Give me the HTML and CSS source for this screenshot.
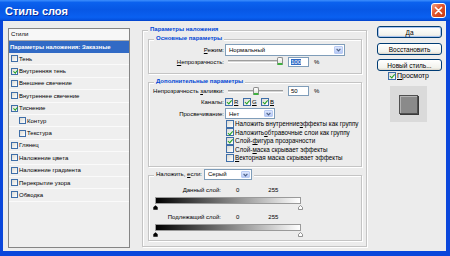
FILE: index.html
```html
<html>
  <head>
    <title>Стиль слоя</title>
    <meta charset="utf-8" />
    <link rel="stylesheet" href="styles.css">
  </head>
  <body>
    <div class="window">
      <div class="titlebar">
        <span class="title">Стиль слоя</span>
        <span class="close">
          <svg width="9" height="9" viewBox="0 0 9 9"><path d="M1.5 1.5 L7.5 7.5 M7.5 1.5 L1.5 7.5" stroke="#fff" stroke-width="1.7" stroke-linecap="round"/></svg>
        </span>
      </div>
      <div class="frame">

        <div class="styles-list">
          <div class="list-head">Стили</div>
          <div class="list-row selected">Параметры наложения: Заказные</div>
          <div class="list-row"><span class="cb"></span>Тень</div>
          <div class="list-row"><span class="cb on"></span>Внутренняя тень</div>
          <div class="list-row"><span class="cb"></span>Внешнее свечение</div>
          <div class="list-row"><span class="cb"></span>Внутреннее свечение</div>
          <div class="list-row"><span class="cb on"></span>Тиснение</div>
          <div class="list-row sub"><span class="cb"></span>Контур</div>
          <div class="list-row sub"><span class="cb"></span>Текстура</div>
          <div class="list-row"><span class="cb"></span>Глянец</div>
          <div class="list-row"><span class="cb"></span>Наложение цвета</div>
          <div class="list-row"><span class="cb"></span>Наложение градиента</div>
          <div class="list-row"><span class="cb"></span>Перекрытие узора</div>
          <div class="list-row"><span class="cb"></span>Обводка</div>
        </div>

        <div class="group outer">
          <div class="group-title">Параметры наложения</div>

          <div class="group inner basic">
            <div class="group-title">Основные параметры</div>
            <div class="row r-mode">
              <span class="lbl"><u>Р</u>ежим:</span>
              <span class="select w-mode"><span class="sel-text">Нормальный</span><span class="drop"><svg width="5" height="4" viewBox="0 0 5 4"><path d="M0.6 0.8 L2.5 2.8 L4.4 0.8" stroke="#4d6185" stroke-width="1.2" fill="none"/></svg></span></span>
            </div>
            <div class="row r-opacity">
              <span class="lbl"><u>Н</u>епрозрачность:</span>
              <span class="slider"><span class="thumb" style="left: 49px"></span></span>
              <span class="num"><span class="hl">100</span></span>
              <span class="pct">%</span>
            </div>
          </div>

          <div class="group inner advanced">
            <div class="group-title">Дополнительные параметры</div>
            <div class="row r-fill">
              <span class="lbl">Непрозрачность <u>з</u>аливки:</span>
              <span class="slider"><span class="thumb" style="left: 25px"></span></span>
              <span class="num">50</span>
              <span class="pct">%</span>
            </div>
            <div class="row r-channels">
              <span class="lbl">Каналы:</span>
              <span class="ch"><span class="cb big on"></span><u>R</u></span>
              <span class="ch"><span class="cb big on"></span><u>G</u></span>
              <span class="ch"><span class="cb big on"></span><u>B</u></span>
            </div>
            <div class="row r-knock">
              <span class="lbl">Просвечивание:</span>
              <span class="select w-knock"><span class="sel-text">Нет</span><span class="drop"><svg width="5" height="4" viewBox="0 0 5 4"><path d="M0.6 0.8 L2.5 2.8 L4.4 0.8" stroke="#4d6185" stroke-width="1.2" fill="none"/></svg></span></span>
            </div>
            <div class="checks">
              <div class="check"><span class="cb big"></span>Наложить внутренние <u>э</u>ффекты как группу</div>
              <div class="check"><span class="cb big on"></span>Наложить <u>о</u>бтравочные слои как группу</div>
              <div class="check"><span class="cb big on"></span>Слой-<u>ф</u>игура прозрачности</div>
              <div class="check"><span class="cb big"></span>Слой-<u>м</u>аска скрывает эффекты</div>
              <div class="check"><span class="cb big"></span><u>В</u>екторная маска скрывает эффекты</div>
            </div>
          </div>

          <div class="group inner blendif">
            <div class="group-title blend-title">
              <span>Наложить, <u>е</u>сли:</span>
              <span class="select w-blend"><span class="sel-text">Серый</span><span class="drop"><svg width="5" height="4" viewBox="0 0 5 4"><path d="M0.6 0.8 L2.5 2.8 L4.4 0.8" stroke="#4d6185" stroke-width="1.2" fill="none"/></svg></span></span>
            </div>
            <div class="row r-range">
              <span class="lbl short">Данный слой:</span>
              <span class="v0">0</span>
              <span class="v255">255</span>
            </div>
            <div class="ramp"></div>
            <div class="markers">
              <svg width="5" height="5" viewBox="0 0 5 5"><path d="M2.5 0.3 L4.7 2.3 V4.7 H0.3 V2.3 Z" fill="#000"/></svg>
              <svg width="5" height="5" viewBox="0 0 5 5"><path d="M2.5 0.5 L4.5 2.4 V4.5 H0.5 V2.4 Z" fill="#fff" stroke="#777" stroke-width="0.8"/></svg>
            </div>
            <div class="row r-range">
              <span class="lbl short">Подлежащий слой:</span>
              <span class="v0">0</span>
              <span class="v255">255</span>
            </div>
            <div class="ramp"></div>
            <div class="markers">
              <svg width="5" height="5" viewBox="0 0 5 5"><path d="M2.5 0.3 L4.7 2.3 V4.7 H0.3 V2.3 Z" fill="#000"/></svg>
              <svg width="5" height="5" viewBox="0 0 5 5"><path d="M2.5 0.5 L4.5 2.4 V4.5 H0.5 V2.4 Z" fill="#fff" stroke="#777" stroke-width="0.8"/></svg>
            </div>
          </div>
        </div>

        <div class="side">
          <div class="btn default">Да</div>
          <div class="btn">Восстановить</div>
          <div class="btn">Новый стиль...</div>
          <div class="preview-check"><span class="cb big on"></span><u>П</u>росмотр</div>
          <div class="preview">
            <div class="swatch"></div>
          </div>
        </div>

      </div>
    </div>
  </body>
</html>
```

FILE: styles.css
```css
body{
    margin: 0;
    padding: 0;
    font-family: "Liberation Sans", Arial, sans-serif;
    font-size: 6px;
    color: #000;
}

u{
    text-decoration: underline;
}

.window{
    width: 450px;
    height: 256px;
    display: flex;
    flex-direction: column;
    background: #0a46db;
}

.titlebar{
    height: 21px;
    flex: none;
    display: flex;
    align-items: center;
    padding: 0 4px 0 5px;
    background: linear-gradient(to bottom, #3d8ffd 0%, #0b61ee 12%, #0757e5 45%, #0a60f1 82%, #0553e0 94%, #0240c8 100%);
}

.title{
    flex: 1;
    color: #fff;
    font-size: 11px;
    font-weight: bold;
    text-shadow: 1px 1px 0 #0a2f9e;
}

.close{
    width: 15px;
    height: 15px;
    box-sizing: border-box;
    border: 1px solid #fff;
    border-radius: 3px;
    background: linear-gradient(135deg, #f4a184, #e2542c 45%, #c43a14);
    display: flex;
    align-items: center;
    justify-content: center;
}

.frame{
    flex: 1;
    display: flex;
    align-items: flex-start;
    margin: 0 4px 5px 3px;
    padding: 5px 0 0 5px;
    background: #ececec;
}

/* styles list */

.styles-list{
    width: 122px;
    height: 220px;
    box-sizing: border-box;
    margin-top: 2px;
    border: 1px solid #858585;
    background: #efefef;
}

.list-head{
    height: 12px;
    box-sizing: border-box;
    line-height: 10px;
    padding-left: 2px;
    background: #f7f7f7;
    border-bottom: 1px solid #a9a9a9;
}

.list-row{
    height: 12.4px;
    box-sizing: border-box;
    display: flex;
    align-items: center;
    padding-left: 2px;
    border-bottom: 1px solid #fafafa;
}

.list-row.selected{
    height: 12px;
    padding-left: 1px;
    background: #316ac5;
    color: #fff;
    font-weight: bold;
    border-bottom: none;
}

.list-row.sub{
    padding-left: 10px;
}

.cb{
    position: relative;
    flex: none;
    width: 7px;
    height: 7px;
    box-sizing: border-box;
    margin-right: 1px;
    border: 1px solid #3f6ea8;
    background: linear-gradient(135deg, #d9d9d3, #ffffff);
}

.cb.big{
    width: 8px;
    height: 8px;
}

.cb.on::after{
    content: "";
    position: absolute;
    left: 1.6px;
    top: 0px;
    width: 1.6px;
    height: 3.2px;
    border-right: 1.2px solid #21a121;
    border-bottom: 1.2px solid #21a121;
    transform: rotate(40deg);
}

.cb.big.on::after{
    left: 2px;
    top: 0.3px;
    height: 3.6px;
}

/* group boxes */

.group{
    box-sizing: border-box;
    border: 1px solid #c4c4c4;
    box-shadow: inset 1px 1px 0 #fff, 1px 1px 0 #fff;
}

.group-title{
    width: max-content;
    height: 9px;
    line-height: 9px;
    margin-top: -6px;
    padding: 0 2px;
    background: #ececec;
    color: #0046d5;
    font-weight: bold;
}

.outer{
    width: 225px;
    margin: 4px 0 0 12px;
    padding: 0 4px 5px 5px;
}

.inner{
    padding: 0 4px 0 4px;
}

.inner .group-title{
    margin-left: 1px;
}

.basic{
    margin-top: 5px;
    padding-bottom: 6px;
}

.advanced{
    margin-top: 8px;
    padding-bottom: 4px;
}

.blendif{
    margin-top: 8px;
    padding-bottom: 3px;
}

.row{
    display: flex;
    align-items: center;
}

.lbl{
    width: 72px;
    flex: none;
    box-sizing: border-box;
    padding-right: 1px;
    text-align: right;
}

.lbl.short{
    width: 69px;
}

.r-mode{
    margin-top: 1px;
    height: 12px;
}

.r-opacity{
    height: 11px;
}

.r-fill{
    height: 10px;
}

.r-channels{
    height: 12px;
}

.r-knock{
    height: 11.5px;
}

/* controls */

.select{
    display: flex;
    box-sizing: border-box;
    padding: 1px;
    border: 1px solid #7f9db9;
    background: #fff;
}

.sel-text{
    flex: 1;
    display: flex;
    align-items: center;
    padding-left: 2px;
}

.drop{
    width: 9px;
    flex: none;
    display: flex;
    align-items: center;
    justify-content: center;
    box-sizing: border-box;
    border: 1px solid #b9cbf3;
    border-radius: 1px;
    background: linear-gradient(to bottom, #dde7fe, #b6c9f6);
}

.w-mode{
    width: 120px;
    height: 12px;
}

.w-knock{
    width: 50px;
    height: 11px;
}

.w-blend{
    width: 48px;
    height: 11px;
    margin-left: 2px;
}

.slider{
    position: relative;
    width: 55px;
    height: 1px;
    margin-left: 3px;
    border-top: 1px solid #9d9d9d;
    border-bottom: 1px solid #fff;
    background: #d4d4d4;
}

.thumb{
    position: absolute;
    top: -4px;
    width: 6px;
    height: 8px;
    box-sizing: border-box;
    border: 1px solid #8d8d8d;
    border-bottom: 2px solid #3fb03f;
    border-radius: 2px 2px 1px 1px;
    background: linear-gradient(to bottom, #fff, #e4e4de);
}

.num{
    width: 21px;
    height: 10px;
    box-sizing: border-box;
    margin-left: 5px;
    padding-left: 2px;
    border: 1px solid #7f9db9;
    background: #fff;
    display: flex;
    align-items: center;
}

.hl{
    background: #316ac5;
    color: #fff;
}

.pct{
    margin-left: 5px;
}

.ch{
    width: 18px;
    display: flex;
    align-items: center;
}

.ch:first-of-type{
    margin-left: 1px;
}

.checks{
    margin-left: 73px;
}

.check{
    height: 8.5px;
    display: flex;
    align-items: center;
    font-size: 6.3px;
    white-space: nowrap;
}

.check .cb{
    margin-right: 1px;
}

/* blend if */

.blend-title{
    display: flex;
    align-items: center;
    height: 11px;
    margin-top: -7px;
    margin-left: 3px;
    color: #000;
    font-weight: normal;
}

.r-range{
    height: 10px;
    margin-top: 5px;
}

.r-range + .ramp + .markers + .r-range{
    margin-top: 2px;
}

.v0{
    margin-left: 14px;
}

.v255{
    margin-left: 29px;
}

.ramp{
    width: 146px;
    height: 7px;
    box-sizing: border-box;
    margin: 2px 0 0 2px;
    border: 1px solid #9a9a9a;
    background: linear-gradient(to right, #000, #fff);
}

.markers{
    width: 150px;
    height: 5px;
    margin-top: 1px;
    display: flex;
    justify-content: space-between;
}

/* right column */

.side{
    width: 65px;
    margin-left: 10px;
    display: flex;
    flex-direction: column;
}

.btn{
    height: 12px;
    box-sizing: border-box;
    border: 1px solid #003c74;
    border-radius: 3px;
    background: linear-gradient(to bottom, #ffffff, #f2f2ec 80%, #d8d2c6);
    display: flex;
    align-items: center;
    justify-content: center;
    font-size: 6.5px;
}

.btn.default{
    box-shadow: inset 0 0 0 1px #a9c4ef;
}

.btn + .btn{
    margin-top: 5px;
}

.btn + .btn + .btn{
    margin-top: 4px;
}

.preview-check{
    height: 9px;
    display: flex;
    align-items: center;
    padding-left: 11px;
    font-size: 7px;
}

.preview{
    width: 37px;
    height: 36px;
    margin: 6px 0 0 13px;
    background: #dadada;
    display: flex;
    align-items: center;
    justify-content: center;
}

.swatch{
    width: 19px;
    height: 19px;
    box-sizing: border-box;
    border: 1px solid #505050;
    background: #8a8a8a;
    box-shadow: inset 1px 1px 0 #b4b4b4, 1px 1px 0 #3a3a3a;
}
```
